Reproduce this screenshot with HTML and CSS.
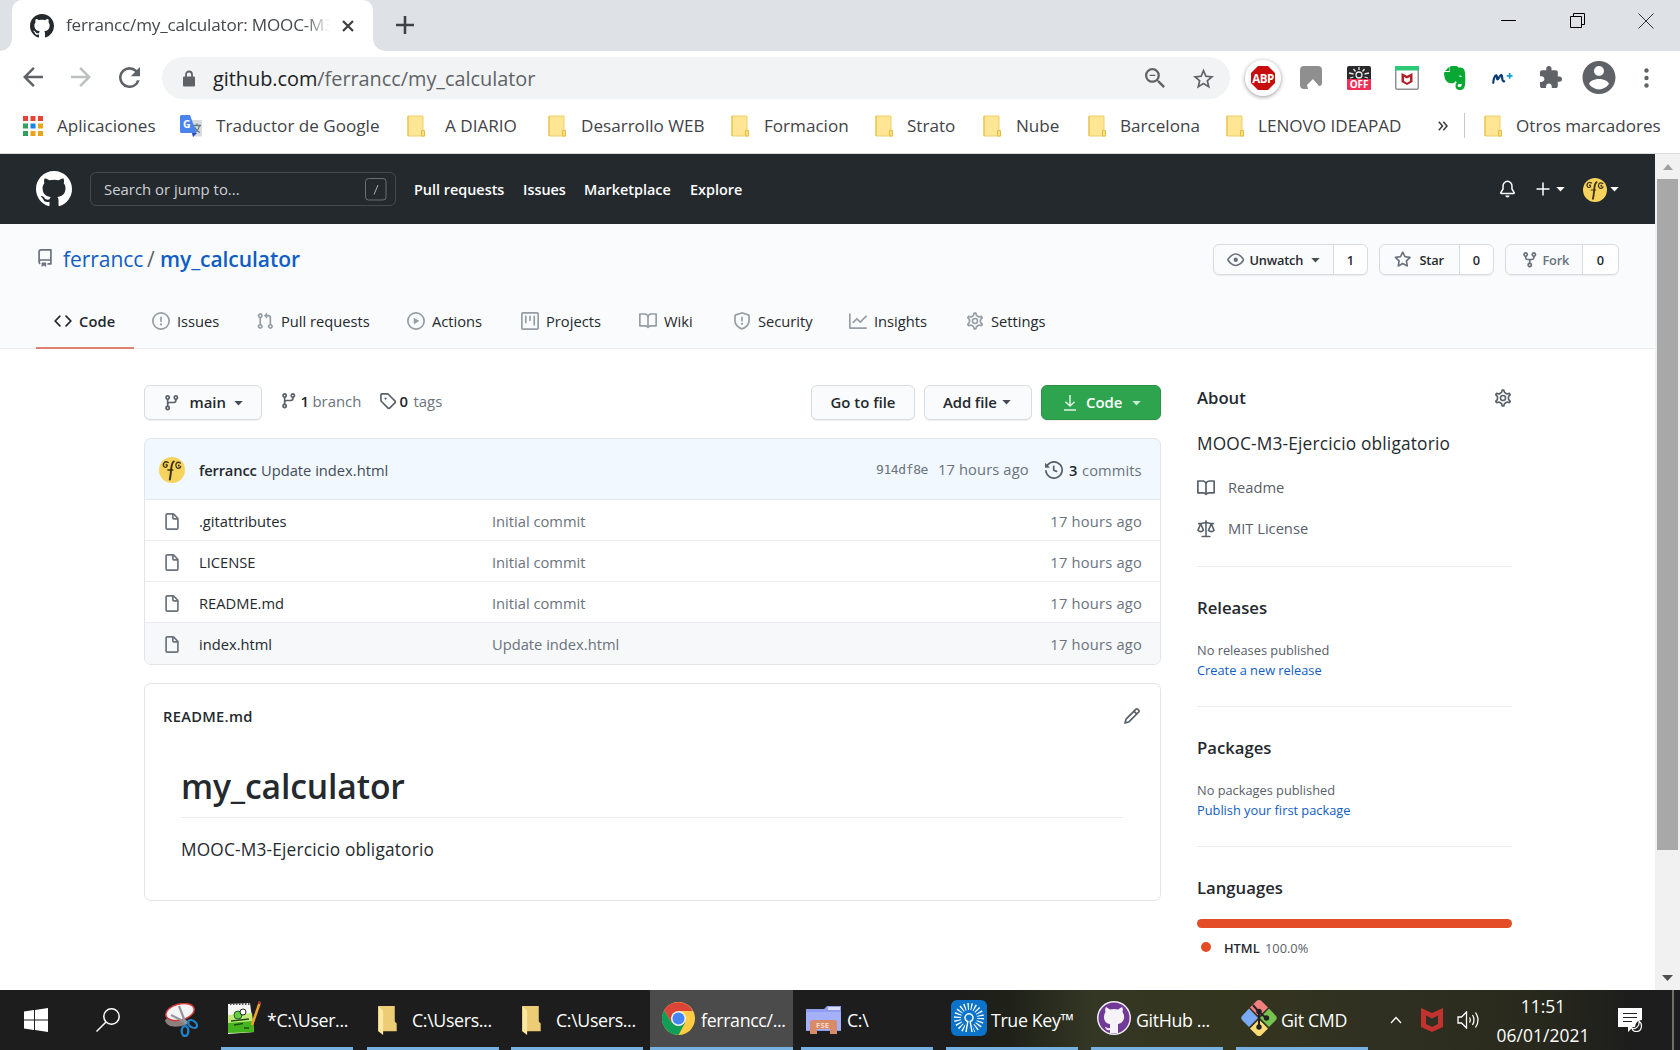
FILE: index.html
```html
<!DOCTYPE html>
<html lang="es">
<head>
<meta charset="utf-8">
<title>ferrancc/my_calculator: MOOC-M3-Ejercicio obligatorio</title>
<link rel="stylesheet" href="styles.css">
</head>
<body>
<svg class="sprite" aria-hidden="true">
<symbol id="mark" viewBox="0 0 16 16"><path d="M8 0C3.58 0 0 3.58 0 8c0 3.54 2.29 6.53 5.47 7.59.4.07.55-.17.55-.38 0-.19-.01-.82-.01-1.49-2.01.37-2.53-.49-2.69-.94-.09-.23-.48-.94-.82-1.13-.28-.15-.68-.52-.01-.53.63-.01 1.08.58 1.23.82.72 1.21 1.87.87 2.33.66.07-.52.28-.87.51-1.07-1.78-.2-3.64-.89-3.64-3.95 0-.87.31-1.59.82-2.15-.08-.2-.36-1.02.08-2.12 0 0 .67-.21 2.2.82.64-.18 1.32-.27 2-.27.68 0 1.36.09 2 .27 1.53-1.04 2.2-.82 2.2-.82.44 1.1.16 1.92.08 2.12.51.56.82 1.27.82 2.15 0 3.07-1.87 3.75-3.65 3.95.29.25.54.73.54 1.48 0 1.07-.01 1.93-.01 2.2 0 .21.15.46.55.38A8.013 8.013 0 0016 8c0-4.42-3.58-8-8-8z"/></symbol>
<symbol id="repo" viewBox="0 0 16 16"><path fill-rule="evenodd" d="M2 2.5A2.5 2.5 0 014.5 0h8.75a.75.75 0 01.75.75v12.5a.75.75 0 01-.75.75h-2.5a.75.75 0 110-1.5h1.75v-2h-8a1 1 0 00-.714 1.7.75.75 0 01-1.072 1.05A2.495 2.495 0 012 11.5v-9zm10.5-1V9h-8c-.356 0-.694.074-1 .208V2.5a1 1 0 011-1h8zM5 12.25v3.25a.25.25 0 00.4.2l1.45-1.087a.25.25 0 01.3 0L8.6 15.7a.25.25 0 00.4-.2v-3.25a.25.25 0 00-.25-.25h-3.5a.25.25 0 00-.25.25z"/></symbol>
<symbol id="code" viewBox="0 0 16 16"><path d="M4.72 3.22a.75.75 0 011.06 1.06L2.06 8l3.72 3.72a.75.75 0 11-1.06 1.06L.47 8.53a.75.75 0 010-1.06l4.25-4.25zm6.56 0a.75.75 0 10-1.06 1.06L13.94 8l-3.72 3.72a.75.75 0 101.06 1.06l4.25-4.25a.75.75 0 000-1.06l-4.25-4.25z"/></symbol>
<symbol id="issue" viewBox="0 0 16 16"><path fill-rule="evenodd" d="M8 1.5a6.5 6.5 0 100 13 6.5 6.5 0 000-13zM0 8a8 8 0 1116 0A8 8 0 010 8zm9 3a1 1 0 11-2 0 1 1 0 012 0zm-.25-6.25a.75.75 0 00-1.5 0v3.5a.75.75 0 001.5 0v-3.5z"/></symbol>
<symbol id="pull" viewBox="0 0 16 16"><path fill-rule="evenodd" d="M7.177 3.073L9.573.677A.25.25 0 0110 .854v4.792a.25.25 0 01-.427.177L7.177 3.427a.25.25 0 010-.354zM3.75 2.5a.75.75 0 100 1.5.75.75 0 000-1.5zm-2.25.75a2.25 2.25 0 113 2.122v5.256a2.251 2.251 0 11-1.5 0V5.372A2.25 2.25 0 011.5 3.25zM11 2.5h-1V4h1a1 1 0 011 1v5.628a2.251 2.251 0 101.5 0V5A2.5 2.5 0 0011 2.5zm1 10.25a.75.75 0 111.5 0 .75.75 0 01-1.5 0zM3.75 12a.75.75 0 100 1.5.75.75 0 000-1.5z"/></symbol>
<symbol id="play" viewBox="0 0 16 16"><path fill-rule="evenodd" d="M1.5 8a6.5 6.5 0 1113 0 6.5 6.5 0 01-13 0zM8 0a8 8 0 100 16A8 8 0 008 0zM6.379 5.227A.25.25 0 006 5.442v5.117a.25.25 0 00.379.214l4.264-2.559a.25.25 0 000-.428L6.379 5.227z"/></symbol>
<symbol id="project" viewBox="0 0 16 16"><path fill-rule="evenodd" d="M1.75 0A1.75 1.75 0 000 1.75v12.5C0 15.216.784 16 1.75 16h12.5A1.75 1.75 0 0016 14.25V1.75A1.75 1.75 0 0014.25 0H1.75zM1.5 1.75a.25.25 0 01.25-.25h12.5a.25.25 0 01.25.25v12.5a.25.25 0 01-.25.25H1.75a.25.25 0 01-.25-.25V1.75zM11.75 3a.75.75 0 00-.75.75v7.5a.75.75 0 001.5 0v-7.5a.75.75 0 00-.75-.75zm-8.25.75a.75.75 0 011.5 0v5.5a.75.75 0 01-1.5 0v-5.5zM8 3a.75.75 0 00-.75.75v3.5a.75.75 0 001.5 0v-3.5A.75.75 0 008 3z"/></symbol>
<symbol id="book" viewBox="0 0 16 16"><path fill-rule="evenodd" d="M0 1.75A.75.75 0 01.75 1h4.253c1.227 0 2.317.59 3 1.501A3.744 3.744 0 0111.006 1h4.245a.75.75 0 01.75.75v10.5a.75.75 0 01-.75.75h-4.507a2.25 2.25 0 00-1.591.659l-.622.621a.75.75 0 01-1.06 0l-.622-.621A2.25 2.25 0 005.258 13H.75a.75.75 0 01-.75-.75V1.75zm8.755 3a2.25 2.25 0 012.25-2.25H14.5v9h-3.757c-.71 0-1.4.201-1.992.572l.004-7.322zm-1.504 7.324l.004-5.073-.002-2.253A2.25 2.25 0 005.003 2.5H1.5v9h3.757a3.75 3.75 0 011.994.574z"/></symbol>
<symbol id="shield" viewBox="0 0 16 16"><path fill-rule="evenodd" d="M7.467.133a1.75 1.75 0 011.066 0l5.25 1.68A1.75 1.75 0 0115 3.48V7c0 1.566-.32 3.182-1.303 4.682-.983 1.498-2.585 2.813-5.032 3.855a1.7 1.7 0 01-1.33 0c-2.447-1.042-4.049-2.357-5.032-3.855C1.32 10.182 1 8.566 1 7V3.48a1.75 1.75 0 011.217-1.667l5.25-1.68zm.61 1.429a.25.25 0 00-.153 0l-5.25 1.68a.25.25 0 00-.174.238V7c0 1.358.275 2.666 1.057 3.86.784 1.194 2.121 2.34 4.366 3.297a.2.2 0 00.154 0c2.245-.956 3.582-2.104 4.366-3.298C13.225 9.666 13.5 8.36 13.5 7V3.48a.25.25 0 00-.174-.237l-5.25-1.68zM9 10.5a1 1 0 11-2 0 1 1 0 012 0zm-.25-5.75a.75.75 0 10-1.5 0v3a.75.75 0 001.5 0v-3z"/></symbol>
<symbol id="graph" viewBox="0 0 16 16"><path d="M1.5 1.75a.75.75 0 00-1.5 0v12.5c0 .414.336.75.75.75h14.5a.75.75 0 000-1.5H1.5V1.75zm14.28 2.53a.75.75 0 00-1.06-1.06L10 7.94 7.53 5.47a.75.75 0 00-1.06 0L3.22 8.72a.75.75 0 001.06 1.06L7 7.06l2.47 2.47a.75.75 0 001.06 0l5.25-5.25z"/></symbol>
<symbol id="gear" viewBox="0 0 16 16"><g fill="none" stroke="currentColor" stroke-width="1.4"><path transform="translate(-.64 -.64) scale(1.08)" d="M7.429 1.525a6.593 6.593 0 011.142 0c.036.003.108.036.137.146l.289 1.105c.147.56.55.967.997 1.189.174.086.341.183.501.29.417.278.97.423 1.53.27l1.102-.303c.11-.03.175.016.195.046.219.31.41.641.573.989.014.031.022.11-.059.19l-.815.806c-.411.406-.562.957-.53 1.456a4.588 4.588 0 010 .582c-.032.499.119 1.05.53 1.456l.815.806c.08.08.073.159.059.19a6.494 6.494 0 01-.573.99c-.02.029-.086.074-.195.045l-1.103-.303c-.559-.153-1.112-.008-1.529.27-.16.107-.327.204-.5.29-.449.222-.851.628-.998 1.189l-.289 1.105c-.029.11-.101.143-.137.146a6.613 6.613 0 01-1.142 0c-.036-.003-.108-.037-.137-.146l-.289-1.105c-.147-.56-.55-.967-.997-1.189a4.502 4.502 0 01-.501-.29c-.417-.278-.97-.423-1.53-.27l-1.102.303c-.11.03-.175-.016-.195-.046a6.492 6.492 0 01-.573-.989c-.014-.031-.022-.11.059-.19l.815-.806c.411-.406.562-.957.53-1.456a4.587 4.587 0 010-.582c.032-.499-.119-1.05-.53-1.456l-.815-.806c-.08-.08-.073-.159-.059-.19a6.44 6.44 0 01.573-.99c.02-.029.086-.075.195-.045l1.103.303c.559.153 1.112.008 1.529-.27.16-.107.327-.204.5-.29.449-.222.851-.628.998-1.189l.289-1.105c.029-.11.101-.143.137-.146z"/><circle cx="8" cy="8" r="2.25"/></g></symbol>
<symbol id="branch" viewBox="0 0 16 16"><path fill-rule="evenodd" d="M11.75 2.5a.75.75 0 100 1.5.75.75 0 000-1.5zm-2.25.75a2.25 2.25 0 113 2.122V6A2.5 2.5 0 0110 8.5H6a1 1 0 00-1 1v1.128a2.251 2.251 0 11-1.5 0V5.372a2.25 2.25 0 111.5 0v1.836A2.492 2.492 0 016 7h4a1 1 0 001-1v-.628A2.25 2.25 0 019.5 3.25zM4.25 12a.75.75 0 100 1.5.75.75 0 000-1.5zM3.5 3.25a.75.75 0 111.5 0 .75.75 0 01-1.5 0z"/></symbol>
<symbol id="tag" viewBox="0 0 16 16"><path fill-rule="evenodd" d="M2.5 7.775V2.75a.25.25 0 01.25-.25h5.025a.25.25 0 01.177.073l6.25 6.25a.25.25 0 010 .354l-5.025 5.025a.25.25 0 01-.354 0l-6.25-6.25a.25.25 0 01-.073-.177zm-1.5 0V2.75C1 1.784 1.784 1 2.75 1h5.025c.464 0 .91.184 1.238.513l6.25 6.25a1.75 1.75 0 010 2.474l-5.026 5.026a1.75 1.75 0 01-2.474 0l-6.25-6.25A1.75 1.75 0 011 7.775zM6 5a1 1 0 100 2 1 1 0 000-2z"/></symbol>
<symbol id="history" viewBox="0 0 16 16"><path d="M1.643 3.143L.427 1.927A.25.25 0 000 2.104V5.75c0 .138.112.25.25.25h3.646a.25.25 0 00.177-.427L2.715 4.215a6.5 6.5 0 11-1.18 4.458.75.75 0 10-1.493.154 8.001 8.001 0 101.6-5.684zM7.75 4a.75.75 0 01.75.75v2.992l2.028.812a.75.75 0 01-.557 1.392l-2.5-1A.75.75 0 017 8.25v-3.5A.75.75 0 017.75 4z"/></symbol>
<symbol id="file" viewBox="0 0 16 16"><path fill-rule="evenodd" d="M3.75 1.5a.25.25 0 00-.25.25v11.5c0 .138.112.25.25.25h8.5a.25.25 0 00.25-.25V6H9.75A1.75 1.75 0 018 4.25V1.5H3.75zm5.75.56v2.19c0 .138.112.25.25.25h2.19L9.5 2.06zM2 1.75C2 .784 2.784 0 3.75 0h5.086c.464 0 .909.184 1.237.513l3.414 3.414c.329.328.513.773.513 1.237v8.086A1.75 1.75 0 0112.25 15h-8.5A1.75 1.75 0 012 13.25V1.75z"/></symbol>
<symbol id="pencil" viewBox="0 0 16 16"><path fill-rule="evenodd" d="M11.013 1.427a1.75 1.75 0 012.474 0l1.086 1.086a1.75 1.75 0 010 2.474l-8.61 8.61c-.21.21-.47.364-.756.445l-3.251.93a.75.75 0 01-.927-.928l.929-3.25a1.75 1.75 0 01.445-.758l8.61-8.61zm1.414 1.06a.25.25 0 00-.354 0L10.811 3.75l1.439 1.44 1.263-1.263a.25.25 0 000-.354l-1.086-1.086zM11.189 6.25L9.75 4.81l-6.286 6.287a.25.25 0 00-.064.108l-.558 1.953 1.953-.558a.249.249 0 00.108-.064l6.286-6.286z"/></symbol>
<symbol id="eye" viewBox="0 0 16 16"><path fill-rule="evenodd" d="M1.679 7.932c.412-.621 1.242-1.75 2.366-2.717C5.175 4.242 6.527 3.5 8 3.5c1.473 0 2.824.742 3.955 1.715 1.124.967 1.954 2.096 2.366 2.717a.119.119 0 010 .136c-.412.621-1.242 1.75-2.366 2.717C10.825 11.758 9.473 12.5 8 12.5c-1.473 0-2.824-.742-3.955-1.715C2.92 9.818 2.09 8.69 1.679 8.068a.119.119 0 010-.136zM8 2c-1.981 0-3.67.992-4.933 2.078C1.797 5.169.88 6.423.43 7.1a1.619 1.619 0 000 1.798c.45.678 1.367 1.932 2.637 3.024C4.329 13.008 6.019 14 8 14c1.981 0 3.67-.992 4.933-2.078 1.27-1.091 2.187-2.345 2.637-3.023a1.619 1.619 0 000-1.798c-.45-.678-1.367-1.932-2.637-3.023C11.671 2.992 9.981 2 8 2zm0 8a2 2 0 100-4 2 2 0 000 4z"/></symbol>
<symbol id="star" viewBox="0 0 16 16"><path fill-rule="evenodd" d="M8 .25a.75.75 0 01.673.418l1.882 3.815 4.21.612a.75.75 0 01.416 1.279l-3.046 2.97.719 4.192a.75.75 0 01-1.088.791L8 12.347l-3.766 1.98a.75.75 0 01-1.088-.79l.72-4.194L.818 6.374a.75.75 0 01.416-1.28l4.21-.611L7.327.668A.75.75 0 018 .25zm0 2.445L6.615 5.5a.75.75 0 01-.564.41l-3.097.45 2.24 2.184a.75.75 0 01.216.664l-.528 3.084 2.769-1.456a.75.75 0 01.698 0l2.77 1.456-.53-3.084a.75.75 0 01.216-.664l2.24-2.183-3.096-.45a.75.75 0 01-.564-.41L8 2.694v.001z"/></symbol>
<symbol id="fork" viewBox="0 0 16 16"><path fill-rule="evenodd" d="M5 3.25a.75.75 0 11-1.5 0 .75.75 0 011.5 0zm0 2.122a2.25 2.25 0 10-1.5 0v.878A2.25 2.25 0 005.75 8.5h1.5v2.128a2.251 2.251 0 101.5 0V8.5h1.5a2.25 2.25 0 002.25-2.25v-.878a2.25 2.25 0 10-1.5 0v.878a.75.75 0 01-.75.75h-4.5A.75.75 0 015 6.25v-.878zm3.75 7.378a.75.75 0 11-1.5 0 .75.75 0 011.5 0zm3-8.750a.75.75 0 100-1.500.75.75 0 000 1.500z"/></symbol>
<symbol id="bell" viewBox="0 0 16 16"><path fill="none" stroke="currentColor" stroke-width="1.400" stroke-linejoin="round" d="M8 .8a4.200 4.200 0 00-4.200 4.200v3L1.700 11.400c-.2.4 0 .9.5.9h11.600c.5 0 .7-.5.5-.9L12.200 8V5A4.200 4.200 0 008 .8z"/><path d="M6 14h4a2 2 0 01-4 0z"/></symbol>
<symbol id="law" viewBox="0 0 16 16"><g fill="none" stroke="currentColor" stroke-width="1.400" stroke-linecap="round" stroke-linejoin="round"><path d="M8 .8v13.800M4.500 14.600h7M1.500 3.200h2.300L8 2.300l4.200.9h2.300M3.300 3.400L.8 9.200c1.300 1.500 3.700 1.500 5 0zM12.700 3.400l-2.500 5.800c1.300 1.500 3.700 1.500 5 0z"/></g></symbol>
<symbol id="caret" viewBox="0 0 10 6"><path d="M0 0h10L5 5.500z"/></symbol>
<symbol id="avatar" viewBox="0 0 26 26"><circle cx="13" cy="13" r="13" fill="#f5d35c"/><g fill="none" stroke="#3e3214" stroke-linecap="round"><path stroke-width="2" d="M14.800 4.500c-3.500 2-1.800 8-4 18"/><path stroke-width="1.300" d="M8.800 13h5M9.300 5.500C5 3 3 8 5.500 10c1.500.8 2.600-.3 2.800-1.300M21.500 6c-4-2.500-5.800 2-4 4.500 1.500 1.300 3.700.8 4.200-1"/></g><circle cx="7.500" cy="7.800" r="1" fill="#3e3214"/><circle cx="19.800" cy="8.400" r="1" fill="#3e3214"/></symbol>
<symbol id="back" viewBox="4 4 16 16"><path d="M20 11H7.830l5.590-5.590L12 4l-8 8 8 8 1.410-1.410L7.830 13H20v-2z"/></symbol>
<symbol id="bm" viewBox="0 0 18 22"><path d="M1 1h15v15h1.500v5H1z" fill="#ffe694" stroke="#edcf68"/><path d="M14.500 21v-5.500h3V21z" fill="#fbe08a" stroke="#e5bc3d"/><path d="M1 1v20" stroke="#e5bd43"/></symbol>
<symbol id="dir" viewBox="0 0 21 32"><path d="M1 1h17v16l2 2v8H1z" fill="#eccd75"/><path d="M1 1l5 5v25l-5-4z" fill="#ffe9a0"/></symbol>
</svg>

<header class="tabstrip">
  <div class="tab">
    <svg class="fav"><use href="#mark"/></svg>
    <span class="tab-title">ferrancc/my_calculator: MOOC-M3</span>
    <svg class="tab-x" viewBox="0 0 12 12"><path d="M1 1l10 10M11 1L1 11" stroke="#3c4043" stroke-width="2.200"/></svg>
  </div>
  <svg class="newtab" viewBox="0 0 18 18"><path d="M9 0v18M0 9h18" stroke="#3f4245" stroke-width="2.600"/></svg>
  <div class="winctl">
    <svg width="16" height="16"><path d="M0 7.500h15" stroke="#000"/></svg>
    <svg width="16" height="16" fill="none" stroke="#000"><path d="M.5 3.500h11v11H.5zM3.500 3V.5h11v11h-3"/></svg>
    <svg width="16" height="16"><path d="M.5.500l15 15M15.500.500l-15 15" stroke="#333"/></svg>
  </div>
</header>

<div class="toolbar">
  <svg class="ic20 g"><use href="#back"/></svg>
  <svg class="ic20 g fwd"><use href="#back"/></svg>
  <svg class="ic21 g" viewBox="4 4 16 16"><path d="M17.650 6.350A7.958 7.958 0 0 0 12 4a8 8 0 1 0 7.730 10h-2.080A5.990 5.990 0 0 1 12 18c-3.310 0-6-2.690-6-6s2.690-6 6-6c1.660 0 3.140.69 4.220 1.780L13 11h7V4l-2.350 2.350z"/></svg>
  <div class="omnibox">
    <svg class="lock" viewBox="0 0 12 16"><path d="M1 6h10q1 0 1 1v8q0 1-1 1H1q-1 0-1-1V7q0-1 1-1z"/><path d="M3 6.500V4a3 3 0 016 0v2.500" fill="none" stroke="#5f6368" stroke-width="1.800"/></svg>
    <span class="url"><b>github.com</b>/ferrancc/my_calculator</span>
    <svg class="zoomout" viewBox="3 3 17.500 17.500"><path d="M15.500 14h-.79l-.28-.27A6.471 6.471 0 0 0 16 9.500 6.500 6.500 0 1 0 9.500 16c1.610 0 3.090-.59 4.230-1.570l.27.28v.79l5 4.990L20.490 19l-4.990-5zm-6 0C7.010 14 5 11.990 5 9.500S7.010 5 9.500 5 14 7.010 14 9.500 11.990 14 9.500 14zM7 9h5v1H7z"/></svg>
    <svg class="favstar" viewBox="2 2 20 19"><path fill-rule="evenodd" d="M22 9.240l-7.190-.62L12 2 9.190 8.630 2 9.240l5.460 4.730L5.820 21 12 17.270 18.180 21l-1.630-7.030L22 9.240zM12 15.400l-3.760 2.270 1-4.280-3.320-2.880 4.380-.38L12 6.100l1.710 4.040 4.380.38-3.320 2.880 1 4.280L12 15.400z"/></svg>
  </div>
  <div class="abp"><svg width="26" height="26" viewBox="0 0 26 26"><path d="M8 1h10l7 7v10l-7 7H8l-7-7V8z" fill="#c70d0d"/></svg><span>ABP</span></div>
  <svg class="e-note" viewBox="0 0 22 23"><path d="M4 0h14q4 0 4 4v13q0 3-3 3l-6-7-6 6 1 4H4q-4 0-4-4V4q0-4 4-4z" fill="#8f8f8f"/></svg>
  <div class="e-off"><svg width="24" height="13" viewBox="0 0 24 13"><g stroke="#e8e8e8" stroke-width="1.300" fill="none"><circle cx="12" cy="9" r="3"/><path d="M12 1v3M6.500 3l2 2.500M17.500 3l-2 2.500M2 7l4.500 1M22 7l-4.500 1M3 12l3.500-1M21 12l-3.500-1"/></g></svg><span>OFF</span></div>
  <svg class="e-mc" viewBox="0 0 24 24"><rect x=".75" y=".75" width="22.500" height="22.500" rx="1.500" fill="#fff" stroke="#8e9091" stroke-width="1.500"/><path d="M0 0h24v4.500H0z" fill="#2ec977"/><path d="M6.500 7l5.500 2.800L17.500 7v9L12 19l-5.500-3z" fill="#b52026"/><path d="M9 11l3 1.500 3-1.500v4l-3 1.800-3-1.800z" fill="#fff"/></svg>
  <svg class="e-ev" viewBox="0 0 22 24"><path d="M7 0h5c2 0 2 1.500 2 1.500 4 0 6 .5 6.500 3 1 4 1 9 .5 14-.4 4-2 5.500-5 5.500-3.500 0-4.500-2-4.500-4.500 0-3 2-4 4-3.500v2c-1.500 0-1.800.5-1.800 1.500s.7 1.500 2 1.500c1.500 0 2-1 2-3-3.500-.2-5.200-1-6-3-1 2.500-4 2.500-6.500 2C2 16.200.2 12 0 7.500c0-1.500 1-1.500 1-1.500h5V1z" fill="#08a835"/><path d="M1 5l4.500-4.500V5z" fill="#08a835"/><path d="M15 10.500c.2-1.500 2.500-1.500 2.800.5z" fill="#fff"/></svg>
  <svg class="e-m" viewBox="0 0 22 13"><path fill="none" d="M1.300 11C1.500 6 3.500 3.300 4.500 3.300c1.200 0 .2 4.200 1.200 4.200S8.500 2.500 10 2.800c1.300.3-.5 6.700 2.800 6.700" stroke="#0b3a76" stroke-width="2.300" stroke-linecap="round"/><path d="M15.500 3.800h6M18.500.8v6" stroke="#169dd0" stroke-width="1.800"/></svg>
  <svg class="e-pz g" viewBox="2 1 21 21"><path d="M20.500 11H19V7c0-1.100-.9-2-2-2h-4V3.500a2.500 2.500 0 0 0-5 0V5H4c-1.100 0-1.990.9-1.990 2v3.800H3.500c1.490 0 2.700 1.210 2.700 2.700s-1.210 2.700-2.700 2.700H2V20c0 1.100.9 2 2 2h3.800v-1.500c0-1.490 1.210-2.700 2.700-2.700 1.490 0 2.700 1.210 2.700 2.700V22H17c1.100 0 2-.9 2-2v-4h1.500a2.500 2.500 0 0 0 0-5z"/></svg>
  <svg class="e-ac g" viewBox="2 2 20 20"><path fill-rule="evenodd" d="M12 2C6.480 2 2 6.480 2 12s4.480 10 10 10 10-4.480 10-10S17.520 2 12 2zm0 3c1.660 0 3 1.340 3 3s-1.340 3-3 3-3-1.340-3-3 1.340-3 3-3zm0 14.200c-2.500 0-4.710-1.280-6-3.220.03-1.990 4-3.080 6-3.080 1.990 0 5.970 1.090 6 3.080-1.290 1.940-3.500 3.220-6 3.220z"/></svg>
  <svg class="e-dots g" viewBox="0 0 5 20"><circle cx="2.500" cy="2.500" r="2.200"/><circle cx="2.500" cy="10" r="2.200"/><circle cx="2.500" cy="17.500" r="2.200"/></svg>
</div>

<nav class="bookmarks">
  <svg width="20" height="20" viewBox="0 0 20 20"><path fill="#ea4335" d="M0 0h5v5H0zM7.500 0h5v5h-5zM15 0h5v5h-5z"/><path fill="#34a05f" d="M0 7.500h5v5H0zM0 15h5v5H0z"/><path fill="#1a83e8" d="M7.500 7.500h5v5h-5z"/><path fill="#eaa41c" d="M15 7.500h5v5h-5zM7.500 15h5v5h-5zM15 15h5v5h-5z"/></svg><span>Aplicaciones</span>
  <span class="gt"><svg width="23" height="22" viewBox="0 0 23 22"><path d="M9 5h13v16.500H13z" fill="#d9dbde"/><path d="M13 10.500h8M17 8.500v2M19.500 10.500c-.5 3-3 6-5.500 7M14.500 12c1 2.500 3 4.500 5.500 5.500" stroke="#5c7c86" stroke-width="1.300" fill="none"/><path d="M12 18h5l-4 4z" fill="#2549b5"/><path d="M1.500 0H10l6.500 18h-15Q0 18 0 16.500v-15Q0 0 1.500 0z" fill="#4a83ee"/></svg><i>G</i></span><span>Traductor de Google</span>
  <svg class="bm"><use href="#bm"/></svg><span>A DIARIO</span>
  <svg class="bm"><use href="#bm"/></svg><span>Desarrollo WEB</span>
  <svg class="bm"><use href="#bm"/></svg><span>Formacion</span>
  <svg class="bm"><use href="#bm"/></svg><span>Strato</span>
  <svg class="bm"><use href="#bm"/></svg><span>Nube</span>
  <svg class="bm"><use href="#bm"/></svg><span>Barcelona</span>
  <svg class="bm"><use href="#bm"/></svg><span>LENOVO IDEAPAD</span>
  <svg width="10" height="10" viewBox="0 0 10 10" fill="none" stroke="#3c4043" stroke-width="1.600"><path d="M.8.8L4.500 5 .8 9.200M5.300.8L9 5 5.300 9.200"/></svg><div class="bm-sep"></div>
  <svg class="bm"><use href="#bm"/></svg><span>Otros marcadores</span>
</nav>

<div class="viewport">
<div class="page">
  <header class="gh-head">
    <svg class="gh-logo"><use href="#mark"/></svg>
    <div class="search"><span>Search or jump to...</span><svg width="22" height="23" viewBox="0 0 22 23" fill="none" stroke="#6a7076"><rect x=".5" y=".5" width="20.500" height="21.500" rx="3"/><path d="M13 7l-4 9.500" stroke="#aab0b5"/></svg></div>
    <nav class="gh-nav"><a>Pull requests</a><a>Issues</a><a>Marketplace</a><a>Explore</a></nav>
    <div class="gh-right">
      <svg class="i-bell"><use href="#bell"/></svg>
      <svg class="i-plus" viewBox="0 0 14 14"><path d="M7 .5v13M.5 7h13" stroke="#fff" stroke-width="1.500"/></svg>
      <svg class="caret c1"><use href="#caret"/></svg>
      <svg class="i-av"><use href="#avatar"/></svg>
      <svg class="caret"><use href="#caret"/></svg>
    </div>
  </header>

  <section class="repohead">
    <div class="repo-row">
      <svg class="i-repo"><use href="#repo"/></svg>
      <h1 class="repo-name"><a>ferrancc</a><i>/</i><a class="strong">my_calculator</a></h1>
      <div class="social unwatch"><div class="sl"><svg class="i18"><use href="#eye"/></svg><b>Unwatch</b><svg class="caret"><use href="#caret"/></svg></div><span>1</span></div>
      <div class="social starb"><div class="sl"><svg class="i18"><use href="#star"/></svg><b>Star</b></div><span>0</span></div>
      <div class="social forkb"><div class="sl"><svg class="i18"><use href="#fork"/></svg><b>Fork</b></div><span>0</span></div>
    </div>
    <nav class="tabs">
      <a class="sel"><svg><use href="#code"/></svg><span>Code</span></a>
      <a><svg><use href="#issue"/></svg><span>Issues</span></a>
      <a><svg><use href="#pull"/></svg><span>Pull requests</span></a>
      <a><svg><use href="#play"/></svg><span>Actions</span></a>
      <a><svg><use href="#project"/></svg><span>Projects</span></a>
      <a><svg><use href="#book"/></svg><span>Wiki</span></a>
      <a><svg><use href="#shield"/></svg><span>Security</span></a>
      <a><svg><use href="#graph"/></svg><span>Insights</span></a>
      <a><svg><use href="#gear"/></svg><span>Settings</span></a>
    </nav>
  </section>

  <div class="cols">
    <main class="main">
      <div class="filebar">
        <div class="btn b-main"><svg class="i18"><use href="#branch"/></svg><b>main</b><svg class="caret"><use href="#caret"/></svg></div>
        <div class="meta m-branch"><svg class="i18"><use href="#branch"/></svg><b>1</b><span>branch</span></div>
        <div class="meta m-tag"><svg class="i18"><use href="#tag"/></svg><b>0</b><span>tags</span></div>
        <div class="btn b-goto"><b>Go to file</b></div>
        <div class="btn b-add"><b>Add file</b><svg class="caret"><use href="#caret"/></svg></div>
        <div class="btn b-code"><svg width="14" height="18" viewBox="0 0 14 18" fill="none" stroke="#dff3e3" stroke-width="1.500"><path d="M7 1v11M2.500 7.800L7 12l4.500-4.200M1 16h12"/></svg><b>Code</b><svg class="caret"><use href="#caret"/></svg></div>
      </div>
      <div class="files">
        <div class="commit">
          <svg class="c-av"><use href="#avatar"/></svg>
          <b class="c-user">ferrancc</b><span class="c-msg">Update index.html</span>
          <code>914df8e</code><span class="c-time">17 hours ago</span>
          <svg class="c-hist"><use href="#history"/></svg><b class="c-n">3</b><span class="c-cm">commits</span>
        </div>
        <div class="row"><svg><use href="#file"/></svg><a>.gitattributes</a><span>Initial commit</span><em>17 hours ago</em></div>
        <div class="row"><svg><use href="#file"/></svg><a>LICENSE</a><span>Initial commit</span><em>17 hours ago</em></div>
        <div class="row"><svg><use href="#file"/></svg><a>README.md</a><span>Initial commit</span><em>17 hours ago</em></div>
        <div class="row hov"><svg><use href="#file"/></svg><a>index.html</a><span>Update index.html</span><em>17 hours ago</em></div>
      </div>
      <article class="readme">
        <div class="rm-head"><b>README.md</b><svg><use href="#pencil"/></svg></div>
        <h2>my_calculator</h2>
        <p>MOOC-M3-Ejercicio obligatorio</p>
      </article>
    </main>
    <aside class="side">
      <section class="about">
        <div class="about-head"><h3>About</h3><svg><use href="#gear"/></svg></div>
        <p class="desc">MOOC-M3-Ejercicio obligatorio</p>
        <div class="sl-row"><svg><use href="#book"/></svg><span>Readme</span></div>
        <div class="sl-row"><svg><use href="#law"/></svg><span>MIT License</span></div>
      </section>
      <section class="blk"><h3>Releases</h3><p>No releases published</p><a>Create a new release</a></section>
      <section class="blk"><h3>Packages</h3><p>No packages published</p><a>Publish your first package</a></section>
      <section class="blk last"><h3>Languages</h3><div class="bar"></div><div class="lang"><i></i><b>HTML</b><span>100.0%</span></div></section>
    </aside>
  </div>
</div>
<div class="scroll">
  <svg width="10" height="6" viewBox="0 0 10 6"><path d="M0 6l5-6 5 6z" fill="#a0a0a0"/></svg>
  <div class="thumb"></div>
  <svg class="down" width="11" height="6" viewBox="0 0 11 6"><path d="M0 0h11L5.500 6z" fill="#505050"/></svg>
</div>
</div>

<footer class="taskbar">
  <svg class="t-start" viewBox="0 0 24 24"><path fill="#fff" d="M0 3.500L10 2v9.500H0zM11 1.900L24 0v11.500H11zM0 12.500h10V22L0 20.500zM11 12.500h13V24l-13-1.900z"/></svg>
  <svg class="t-search" viewBox="0 0 24 24" fill="none" stroke="#fff" stroke-width="1.500"><circle cx="15.500" cy="8.500" r="7.700"/><path d="M10 14L.5 23.500"/></svg>
  <svg class="t-snip" viewBox="0 0 34 34"><path d="M1 17l8-6 17 8c-3 4-23 9-25-2z" fill="#8d7f7c"/><ellipse cx="16" cy="9" rx="14.500" ry="8" transform="rotate(-14 16 9)" fill="#f4f3f5" stroke="#d43b3b" stroke-width="1.500"/><path d="M7 12l16 8M15 3l7 18" stroke="#92979d" stroke-width="2.200"/><g fill="none" stroke="#2281c6" stroke-width="2.400"><ellipse cx="21" cy="28" rx="3.300" ry="5"/><ellipse cx="28.500" cy="21" rx="5" ry="3.200" transform="rotate(35 28.500 21)"/></g></svg>
  <div class="task"><svg class="n-npp" viewBox="0 0 34 34"><path d="M1 3l22-1 4 29L1 33z" fill="#f5f6f4"/><path d="M1 14l24-2 2 19L1 32z" fill="#c5ea7a"/><path d="M1 22l25-2 1 11L1 32z" fill="#45b51f"/><path d="M3 3h20" stroke="#555" stroke-width="2" stroke-dasharray="1.500 1.500"/><circle cx="11" cy="14" r="4" fill="#61cf45" stroke="#275e18"/><circle cx="16" cy="11" r="3" fill="#fff" stroke="#222"/><path d="M4 20l18-2M7 24l9-1.500M17 27h5" stroke="#1f4e14" stroke-width="1.500"/><path d="M25 24L33 1" stroke="#f0a52a" stroke-width="2.600"/><path d="M32 3l1-2.500" stroke="#a6293a" stroke-width="2.600"/></svg><span>*C:\User...</span></div>
  <div class="task"><svg class="n-dir"><use href="#dir"/></svg><span>C:\Users...</span></div>
  <div class="task"><svg class="n-dir"><use href="#dir"/></svg><span>C:\Users...</span></div>
  <div class="task active"><svg class="n-chr" viewBox="0 0 48 48"><circle cx="24" cy="24" r="24" fill="#fc4"/><path d="M24 13h20.800A24 24 0 003.200 12l10.400 17.500z" fill="#db4437"/><path d="M24 48l10-18.500-20.400 0L3.200 12A24 24 0 0024 48z" fill="#0f9d58"/><circle cx="24" cy="24" r="11" fill="#f1f1f1"/><circle cx="24" cy="24" r="8.700" fill="#4285f4"/></svg><span>ferrancc/...</span></div>
  <div class="task"><div class="n-fse"><svg viewBox="0 0 36 28"><path d="M0 3h18l3-3h14v25H0z" fill="#8f9cf0"/><path d="M0 6h35v18H0z" fill="#a4b0fa"/><path d="M22 1h12v3H22z" fill="#d9deff"/><path d="M4 28V17q0-3 3-3h21q3 0 3 3v11h-7v-5H11v5z" fill="#d88b66"/></svg><i>FSE</i></div><span>C:\</span></div>
  <div class="task"><svg class="n-tk" viewBox="0 0 36 36"><rect width="36" height="36" rx="6" fill="#0b73c9"/><circle cx="18" cy="18" r="11.500" fill="none" stroke="#fff" stroke-width="7" stroke-dasharray="1.200 2.080"/><path d="M12.500 33L16 20h4l3.500 13z" fill="#0b73c9"/><path d="M15 32l1.800-10.500a4 4 0 112.400 0L21 32" fill="none" stroke="#fff" stroke-width="1.400"/></svg><span>True Key™</span></div>
  <div class="task"><svg class="n-gh" viewBox="0 0 34 34"><circle cx="17" cy="17" r="17" fill="#f2eff4"/><circle cx="17" cy="17" r="15.500" fill="#713a96"/><path d="M9 6l4 2.500q4-1 8 0L25 6c1 1.500 1 3 .5 5 4 6 0 11.500-4.500 12v9h-8v-3c-3 1-4-1-5-3 2 .5 3 1.500 5 1v-4c-5-.5-8-6-4.500-12C8 9 8 7.500 9 6z" fill="#f6f3f8"/></svg><span>GitHub ...</span></div>
  <div class="task"><svg class="n-git" viewBox="0 0 36 36"><path d="M18 0q1.500 0 2.500 1l6.500 6.500-9 9-9-9L15.500 1Q16.500 0 18 0z" fill="#f27f80"/><path d="M8 8.500l9 9.500-9 9-7-7q-1.500-2 0-4z" fill="#7aa9f8"/><path d="M28 8.500l7 7.500q1.500 2 0 4l-7 7-9-9z" fill="#76c44f"/><path d="M18 19.500l9 9-7 7q-2 1-4 0l-7-7z" fill="#fddc75"/><path d="M12 5l6 7v15M18 12l7 6" stroke="#222" stroke-width="2" fill="none"/><circle cx="18" cy="11.500" r="2.700" fill="#222"/><circle cx="25.500" cy="18" r="2.700" fill="#222"/><circle cx="18" cy="27" r="2.700" fill="#222"/></svg><span>Git CMD</span></div>
  <svg class="s-up" viewBox="0 0 12 8"><path d="M1 7l5-5.500L11 7" fill="none" stroke="#fff" stroke-width="1.300"/></svg>
  <svg class="s-mc" viewBox="0 0 22 24"><path d="M0 0l11 5L22 0v19l-11 5-11-5z" fill="#c2332f"/><path d="M5 7.500l6 3 6-3V16l-6 3-6-3z" fill="#2f3021"/></svg>
  <svg class="s-vol" viewBox="0 0 23 18" fill="none" stroke="#fff" stroke-width="1.300"><path d="M1 6h3.500l5-5v16l-5-5H1zM12.500 6.500q1.500 2.500 0 5M15.500 4q3 5 0 10M18.500 1.500q5 7.500 0 15"/></svg>
  <div class="clock"><span>11:51</span><span>06/01/2021</span></div>
  <svg class="s-note" viewBox="0 0 25 24"><path d="M0 0h24v12q-6 0-7 7h-2l-5 5v-5H0z" fill="#fff"/><path d="M5 5.500h14M5 9.500h14M5 13.500h9" stroke="#222" stroke-width="1.200"/><path d="M21 13c4 3 3 10-2 10.500-2.500.2-4.500-1-5-3 4 1 8-3 7-7.500z" fill="#222" stroke="#fff" stroke-width="1.200"/></svg>
  <div class="s-desk"></div>
</footer>
</body>
</html>
```
FILE: styles.css
```css
* { box-sizing: border-box; }
body { margin: 0; width: 1680px; height: 1050px; overflow: hidden; display: flex; flex-direction: column; background: #fff; color: #24292e; font-family: "Open Sans", "Noto Sans", sans-serif; white-space: nowrap; }
svg { display: block; flex: none; }
svg:not([fill]) { fill: currentColor; }
b { font-weight: 600; }
i, em { font-style: normal; }
h1, h2, h3, p { margin: 0; }
.sprite { position: absolute; width: 0; height: 0; }

/* Window tab strip */
.tabstrip { height: 51px; background: #dee1e6; display: flex; align-items: flex-start; }
.tab { position: relative; margin-left: 12px; width: 361px; height: 51px; padding-left: 18px; background: #fff; border-radius: 10px 10px 0 0; display: flex; align-items: center; }
.tab::before, .tab::after { content: ""; position: absolute; bottom: 0; width: 12px; height: 12px; }
.tab::before { left: -12px; background: radial-gradient(circle at 0 0, #dee1e6 11.5px, #fff 12px); }
.tab::after { right: -12px; background: radial-gradient(circle at 12px 0, #dee1e6 11.5px, #fff 12px); }
.fav { width: 24px; height: 24px; }
.tab-title { margin-left: 12px; width: 264px; padding-bottom: 2px; overflow: hidden; font-size: 17.1px; letter-spacing: -.2px; color: #45494d; mask-image: linear-gradient(90deg, #000 238px, transparent 264px); }
.tab-x { margin-left: 12px; width: 12px; height: 12px; }
.newtab { margin: 16px 0 0 23px; width: 18px; height: 18px; }
.winctl { margin: 13px 26px 0 auto; display: flex; width: 153px; justify-content: space-between; }

/* Address bar */
.toolbar { height: 57px; padding: 6px 0 0 23px; display: flex; align-items: flex-start; color: #5f6368; }
.toolbar > svg { margin-top: 10px; }
.ic20 { width: 20px; height: 20px; }
.fwd { transform: scaleX(-1); margin-left: 28px; color: #bdbfc1; }
.ic21 { width: 21px; height: 21px; margin-left: 28px; }
.omnibox { margin-left: 22px; width: 1068px; height: 42px; border-radius: 21px; background: #f1f3f4; display: flex; align-items: center; padding-left: 21px; }
.lock { width: 12px; height: 17px; }
.url { margin-left: 18px; width: 932px; padding-top: 2px; font-size: 19.9px; line-height: 28px; letter-spacing: -.03px; }
.url b { font-weight: 400; color: #202124; }
.zoomout { width: 20px; height: 20px; }
.favstar { margin-left: 28px; width: 21px; height: 21px; }
.abp { position: relative; margin: 3px 0 0 15px; width: 36px; height: 36px; border-radius: 50%; background: #fff; box-shadow: 0 1px 4px #999; display: grid; place-items: center; }
.abp svg, .abp span { grid-area: 1 / 1; }
.abp span { z-index: 1; color: #fff; font: 700 11.5px "Open Sans", sans-serif; letter-spacing: -.5px; }
.toolbar > .e-note { margin: 9px 0 0 19px; width: 22px; height: 23px; }
.e-off { margin: 9px 0 0 25px; width: 24px; height: 24px; border-radius: 2px; background: #29292c; overflow: hidden; }
.e-off span { display: block; height: 11px; background: #f02f58; color: #fff; font: 700 10px/11px "Open Sans", sans-serif; text-align: center; letter-spacing: -.1px; }
.toolbar > .e-mc { margin: 9px 0 0 24px; width: 24px; height: 24px; }
.toolbar > .e-ev { margin: 9px 0 0 25px; width: 22px; height: 24px; }
.toolbar > .e-m { margin: 15px 0 0 26px; width: 21px; height: 13px; }
.toolbar > .e-pz { margin: 9px 0 0 27px; width: 22px; height: 22px; }
.toolbar > .e-ac { margin: 4px 0 0 20px; width: 34px; height: 33px; }
.toolbar > .e-dots { margin: 11px 0 0 28px; width: 5px; height: 20px; }

/* Bookmarks */
.bookmarks { height: 46px; padding: 0 0 10px 23px; border-bottom: 1px solid #dadce0; display: grid; align-items: center; font-size: 17.1px; color: #3f4347;
  grid-template-columns: 34px 123px 36px 191px 38px 103px 33px 150px 33px 111px 32px 76px 33px 72px 32px 106px 32px 180px 26px 20px 32px 142px; }
.bookmarks span { line-height: 24px; }
.bm { width: 18px; height: 22px; }
.gt { position: relative; }
.gt i { position: absolute; left: 3px; top: 0; font-size: 10.5px; line-height: 18px; font-weight: 700; color: #fff; }
.bm-sep { width: 1px; height: 25px; background: #c6c9cc; }

/* Page viewport */
.viewport { height: 836px; display: flex; }
.page { width: 1655px; }
.scroll { width: 25px; background: #f1f1f1; padding-top: 10px; display: flex; flex-direction: column; align-items: center; }
.thumb { margin-top: 9px; width: 21px; height: 671px; background: #a8a8a8; }
.down { margin-top: 125px; }

/* GitHub header */
.gh-head { height: 70px; background: #24292e; color: #fff; display: flex; align-items: center; padding: 0 36px 0 36px; }
.gh-logo { width: 36px; height: 36px; }
.search { margin-left: 18px; width: 306px; height: 34px; border: 1px solid #444a50; border-radius: 6px; display: flex; align-items: center; justify-content: space-between; padding: 0 8px 0 13px; font-size: 14.9px; color: #ced0d3; }
.gh-nav { margin-left: 18px; display: grid; grid-template-columns: 109px 61px 106px 60px; font-size: 14.4px; font-weight: 600; }
.gh-right { margin-left: auto; display: flex; align-items: center; }
.i-bell { width: 17px; height: 18px; }
.i-plus { margin-left: 20px; width: 14px; height: 14px; }
.caret { width: 9px; height: 5px; margin-top: 1px; }
.c1 { margin-left: 6px; }
.i-av { margin: 2px 3px 0 18px; width: 24px; height: 24px; }

/* Repository head */
.repohead { height: 125px; background: #fafbfc; border-bottom: 1px solid #eaecef; }
.repo-row { display: flex; height: 70px; padding: 20px 0 0 36px; align-items: flex-start; }
.i-repo { margin-top: 5px; width: 18px; height: 18px; color: #6a737d; }
.repo-name { margin: 1px 0 0 9px; width: 1150px; display: grid; grid-template-columns: 84px 14px auto; font-size: 21px; line-height: 29px; font-weight: 400; letter-spacing: -.05px; color: #0f5dc5; }
.repo-name i { color: #586069; }
.repo-name .strong { font-weight: 600; margin-left: -1px; }
.social { height: 31px; border: 1px solid #d9dbde; border-radius: 6px; display: flex; font-size: 12.8px; line-height: 30px; box-shadow: 0 1px 1px #1b1f2310; }
.social b { letter-spacing: -.2px; padding-top: 1px; }
.sl { display: flex; align-items: center; border-right: 1px solid #d9dbde; }
.sl svg { color: #6a737d; }
.sl .caret { margin-left: 8px; color: #444d56; }
.social > span { flex: 1; text-align: center; background: #fff; border-radius: 0 6px 6px 0; font-weight: 600; }
.i18 { width: 17.5px; height: 17.5px; }
.unwatch { width: 155px; }
.unwatch .sl { width: 120px; padding-left: 13px; }
.unwatch b { margin-left: 5px; width: 53px; }
.starb { margin-left: 11px; width: 115px; }
.starb .sl { width: 80px; padding-left: 14px; }
.starb b { margin-left: 8px; }
.forkb { margin-left: 11px; width: 114px; }
.forkb .sl { width: 77px; padding-left: 15px; }
.forkb b { margin-left: 4px; color: #6a737d; }
.tabs { display: grid; height: 55px; padding-left: 54px; font-size: 14.7px;
  grid-template-columns: 98px 104px 151px 114px 118px 94px 116px 117px 100px; }
.tabs a { display: flex; align-items: center; height: 54px; }
.tabs svg { width: 18px; height: 18px; color: #959da5; }
.tabs span { margin-left: 7px; }
.tabs .sel { position: relative; font-weight: 600; }
.tabs .sel span { letter-spacing: .1px; }
.tabs .sel svg { color: #24292e; }
.tabs .sel::after { content: ""; position: absolute; left: -18px; top: 53px; width: 98px; height: 2px; background: #dc8374; }

/* Columns */
.cols { display: flex; padding: 36px 0 0 144px; }
.main { width: 1017px; }
.side { margin-left: 36px; width: 315px; }
.filebar { display: flex; height: 53px; }
.btn { height: 35px; border: 1px solid #d9dbde; border-radius: 6px; background: #fafbfc; display: flex; align-items: center; font-size: 14.9px; box-shadow: 0 1px 1px #1b1f2310; }
.btn b { padding-bottom: 2px; }
.btn .caret { color: #444d56; }
.btn .i18 { color: #586069; }
.b-main { width: 118px; padding-left: 18px; }
.b-main b { margin-left: 9px; width: 44px; }
.meta { display: flex; align-items: center; height: 32px; font-size: 14.9px; color: #6a737d; }
.meta b { margin-left: 3px; width: 12px; color: #24292e; }
.meta svg { color: #586069; }
.m-branch { margin-left: 18px; width: 99px; }
.m-tag b { width: 14px; }
.m-tag { width: 432px; }
.b-goto { width: 104px; justify-content: center; }
.b-add { margin-left: 9px; width: 108px; padding-left: 18px; }
.b-add b { width: 59px; letter-spacing: -.1px; }
.b-add .caret { margin-top: -1px; }
.b-code { margin-left: 9px; width: 120px; background: #2ea44f; border-color: #2a9147; color: #fff; padding-left: 21px; }
.b-code b { margin-left: 9px; width: 46px; }
.b-code .caret { color: #c9ecd2; }

.files { height: 227px; border: 1px solid #e1e4e8; border-radius: 7px; overflow: hidden; font-size: 14.7px; color: #6a737d; }
.files b { color: #24292e; }
.commit { margin: -1px -1px 0; border: 1px solid #cce0f4; border-bottom-color: #dfe9f2; border-radius: 7px 7px 0 0; height: 62px; background: #f1f8ff; display: grid; align-items: center; padding: 1px 0 0 14px;
  grid-template-columns: 40px 62px 615px 62px 107px 24px 14px auto; }
.c-av { width: 26px; height: 26px; }
.c-msg { color: #444d56; }
.c-user { letter-spacing: -.15px; }
.c-time { margin-top: -1px; letter-spacing: .12px; }
.c-cm { margin-left: -1px; letter-spacing: .1px; }
.commit code { font: 13px "DejaVu Sans Mono", monospace; letter-spacing: -.4px; }
.c-hist { width: 18px; height: 18px; color: #586069; }
.row { height: 41px; border-bottom: 1px solid #eaecef; display: grid; grid-template-columns: 34px 293px 400px 1fr; align-items: center; padding: 1px 18px 0 20px; }
.row:last-child { border: 0; }
.row svg { margin: 2px 0 0 -2px; width: 18px; height: 18px; }
.row a { color: #24292e; }
.row em { text-align: right; letter-spacing: .2px; }
.hov { background: #f6f8fa; height: 43px; padding-bottom: 2px; }

.readme { margin-top: 18px; height: 218px; border: 1px solid #e1e4e8; border-radius: 7px; }
.rm-head { height: 63px; padding: 0 19px 0 18px; display: flex; align-items: center; justify-content: space-between; font-size: 14.7px; letter-spacing: .3px; }
.rm-head svg { width: 18px; height: 18px; color: #586069; }
.readme h2 { margin: 18px 37px 0 36px; height: 53px; border-bottom: 1px solid #eaecef; font-size: 33.7px; line-height: 42px; font-weight: 600; letter-spacing: -.15px; }
.readme p { margin: 20px 36px 0; font-size: 17.3px; line-height: 24px; letter-spacing: .18px; }

/* Sidebar */
.about { height: 182px; border-bottom: 1px solid #eaecef; }
.about-head { display: flex; justify-content: space-between; height: 27px; padding-top: 1px; }
.about-head svg { width: 18px; height: 18px; margin-top: 3px; color: #586069; }
.side h3 { font-size: 16.7px; line-height: 23px; font-weight: 600; color: #24292e; }
.desc { margin-top: 20px; font-size: 17.3px; line-height: 24px; letter-spacing: .18px; }
.sl-row { display: flex; align-items: center; height: 41px; font-size: 14.7px; color: #586069; }
.desc + .sl-row { margin-top: 11px; }
.sl-row svg { width: 18px; height: 18px; margin: 1px 13px 0 0; }
.sl-row span { padding-bottom: 1px; }
.blk { height: 140px; border-bottom: 1px solid #eaecef; padding-top: 29px; font-size: 12.8px; line-height: 20px; color: #586069; }
.blk p { margin-top: 21px; }
.blk a { display: block; color: #0f5dc5; }
.last { border: 0; }
.bar { margin-top: 20px; height: 9px; border-radius: 5px; background: #e34c26; }
.lang { display: flex; align-items: center; margin-top: 10px; }
.lang i { margin: -2px 0 0 4px; width: 10px; height: 10px; border-radius: 50%; background: #e34c26; }
.lang b { margin-left: 13px; width: 41px; color: #24292e; }

/* Taskbar */
.taskbar { height: 60px; background: linear-gradient(90deg, #1d1d1d 57%, #1f2119 60%, #343724 65%, #34351f 73%, #303022 82%, #292a1d 91%, #1d1d1d 97%); display: flex; color: #fff; font-size: 17.8px; align-items: flex-start; padding-left: 24px; }
.t-start { width: 24px; height: 24px; margin-top: 18px; }
.t-search { width: 24px; height: 24px; margin: 18px 0 0 48px; }
.t-snip { width: 34px; height: 34px; margin: 13px 23px 0 44px; }
.task { height: 60px; border-bottom: 3px solid #76b1e2; display: flex; align-items: center; width: 132px; margin-right: 13px; padding-top: 3px; letter-spacing: -.35px; }
.task svg { margin-left: 6px; }
.task:nth-of-type(1) { margin-right: 14px; }
.task:nth-of-type(2) { margin-right: 12px; }
.task:nth-of-type(3) { margin-right: 7px; }
.n-npp { width: 34px; height: 34px; margin-right: 6px; margin-top: -4px; }
.task .n-dir { width: 21px; height: 31px; margin: 0 14px 0 10px; }
.task.active { background: #4b4b4b; width: 143px; margin-right: 8px; }
.task .n-chr { width: 33px; height: 33px; margin: -3px 6px 0 12px; }
.n-fse { position: relative; width: 36px; height: 28px; margin: -1px 5px 0 5px; }
.n-fse svg { width: 36px; height: 28px; margin: 0; }
.n-fse i { position: absolute; left: 10px; top: 14px; font-size: 7.5px; line-height: 10px; font-weight: 700; letter-spacing: .3px; color: #f9ddd0; }
.task .n-tk, .task .n-git { width: 36px; height: 36px; margin: -4px 4px 0 5px; }
.task .n-gh { width: 34px; height: 34px; margin: -4px 5px 0 6px; }
.s-up { width: 12px; height: 8px; margin: 26px 0 0 9px; }
.s-mc { width: 22px; height: 24px; margin: 18px 0 0 19px; }
.s-vol { width: 23px; height: 18px; margin: 21px 0 0 14px; }
.clock { margin-left: 15px; width: 96px; height: 60px; display: flex; flex-direction: column; align-items: center; font-size: 17.4px; line-height: 28.5px; letter-spacing: .05px; padding-top: 2px; }
.s-note { width: 25px; height: 24px; margin: 18px 0 0 27px; }
.s-desk { width: 2px; height: 60px; background: #6f6f68; margin: 0 0 0 29px; }
```
